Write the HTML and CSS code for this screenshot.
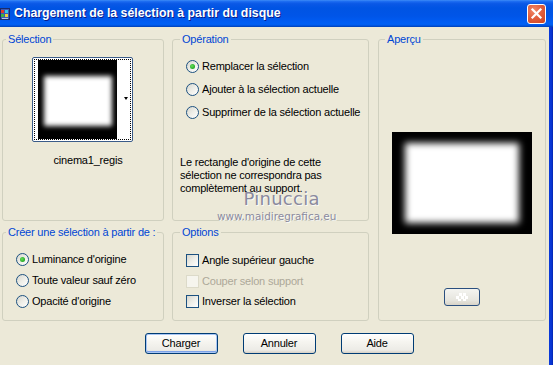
FILE: index.html
```html
<!DOCTYPE html>
<html lang="fr">
<head>
<meta charset="utf-8">
<title>Chargement de la sélection à partir du disque</title>
<link rel="stylesheet" href="styles.css">
</head>
<body>
<div class="window">
  <header class="titlebar">
    <svg class="app-icon" width="11" height="14" viewBox="0 0 11 14">
      <rect x="0" y="1" width="10" height="12" fill="#1a2a6a"/>
      <rect x="1" y="2" width="8" height="10" fill="#3a58b8"/>
      <rect x="1" y="3" width="3" height="3" fill="#e03a2a"/>
      <rect x="5" y="3" width="3" height="3" fill="#38c8e8"/>
      <rect x="1" y="7" width="3" height="3" fill="#40b040"/>
      <rect x="5" y="7" width="3" height="3" fill="#f0d040"/>
      <rect x="2" y="11" width="6" height="1" fill="#c0c8e0"/>
    </svg>
    <span class="title">Chargement de la sélection à partir du disque</span>
    <span class="close" aria-label="Fermer">
      <svg width="17" height="18" viewBox="0 0 17 18"><path d="M4.5 4.5 L12.5 12.5 M12.5 4.5 L4.5 12.5" stroke="#fff" stroke-width="2.2" stroke-linecap="square"/></svg>
    </span>
  </header>
  <div class="frame">
    <main class="client">
      <div class="groups">
        <fieldset class="group g-sel">
          <legend>Sélection</legend>
          <div class="thumb">
            <div class="thumb-focus">
              <div class="thumb-img"><div class="glow glow-small"></div></div>
              <span class="thumb-arrow"></span>
            </div>
          </div>
          <div class="thumb-name">cinema1_regis</div>
        </fieldset>

        <fieldset class="group g-op">
          <legend>Opération</legend>
          <div class="options-list op-list">
            <label class="opt"><span class="radio checked"></span><span>Remplacer la sélection</span></label>
            <label class="opt"><span class="radio"></span><span>Ajouter à la sélection actuelle</span></label>
            <label class="opt"><span class="radio"></span><span>Supprimer de la sélection actuelle</span></label>
          </div>
          <p class="note">Le rectangle d'origine de cette<br>sélection ne correspondra pas<br>complètement au support.</p>
        </fieldset>

        <fieldset class="group g-prev">
          <legend>Aperçu</legend>
          <div class="preview"><div class="glow glow-big"></div></div>
          <button class="btn btn-small" type="button" aria-label="Fond">
            <svg width="14" height="8" viewBox="0 0 14 8">
              <rect x="4" y="0" width="3" height="3" fill="#fff"/>
              <rect x="8" y="0" width="3" height="3" fill="#fff"/>
              <rect x="1" y="3" width="3" height="3" fill="#fff"/>
              <rect x="6" y="3" width="3" height="3" fill="#fff"/>
              <rect x="10" y="3" width="3" height="3" fill="#fff"/>
              <rect x="3" y="6" width="3" height="2" fill="#fff"/>
              <rect x="8" y="6" width="3" height="2" fill="#fff"/>
            </svg>
          </button>
        </fieldset>

        <fieldset class="group g-create">
          <legend>Créer une sélection à partir de :</legend>
          <div class="options-list create-list">
            <label class="opt"><span class="radio checked"></span><span>Luminance d'origine</span></label>
            <label class="opt"><span class="radio"></span><span>Toute valeur sauf zéro</span></label>
            <label class="opt"><span class="radio"></span><span>Opacité d'origine</span></label>
          </div>
        </fieldset>

        <fieldset class="group g-opt">
          <legend>Options</legend>
          <div class="options-list opt-list">
            <label class="opt"><span class="check"></span><span>Angle supérieur gauche</span></label>
            <label class="opt disabled"><span class="check"></span><span>Couper selon support</span></label>
            <label class="opt"><span class="check"></span><span>Inverser la sélection</span></label>
          </div>
        </fieldset>
      </div>

      <div class="actions">
        <button class="btn btn-default" type="button">Charger</button>
        <button class="btn" type="button">Annuler</button>
        <button class="btn" type="button">Aide</button>
      </div>

      <div class="watermark">
        <span class="wm-name">Pinuccia</span>
        <span class="wm-url">www.maidiregrafica.eu</span>
      </div>
    </main>
    <div class="rborder"></div>
  </div>
</div>
</body>
</html>
```

FILE: styles.css
```css
* { box-sizing: border-box; }
html, body { margin: 0; padding: 0; }
body {
  width: 553px;
  height: 365px;
  overflow: hidden;
  background: #ECE9D8;
  font-family: "Liberation Sans", Arial, sans-serif;
  font-size: 11px;
  line-height: 13px;
  letter-spacing: -0.2px;
  color: #000;
}
.window {
  width: 553px;
  height: 365px;
  display: flex;
  flex-direction: column;
}

/* title bar */
.titlebar {
  height: 27px;
  flex: none;
  display: flex;
  align-items: center;
  background: linear-gradient(180deg, #3d8cf7 0%, #1a6af0 6%, #0a58e6 14%, #0054e3 30%, #0055e8 60%, #005cf2 80%, #0060f4 90%, #0050d8 96%, #003fb0 100%);
}
.app-icon { flex: none; margin-right: 3px; margin-top: 1px; }
.title {
  flex: 1;
  color: #fff;
  font-weight: bold;
  font-size: 12.3px;
  letter-spacing: 0;
  text-shadow: 1px 1px 0 #0a1c8a;
  white-space: nowrap;
}
.close {
  flex: none;
  width: 19px;
  height: 20px;
  margin-right: 7px;
  margin-top: 1px;
  border: 1px solid #fff;
  border-radius: 3px;
  background: radial-gradient(circle at 35% 30%, #f0896a 0%, #e2603e 45%, #cc4220 100%);
  display: flex;
  align-items: center;
  justify-content: center;
}

/* frame */
.frame { flex: 1; display: flex; }
.client {
  flex: 1;
  position: relative;
  padding: 6px 0 0 2px;
}
.rborder {
  width: 4px;
  flex: none;
  background: linear-gradient(90deg, #0a3ad8 0%, #0836d6 50%, #0631cc 75%, #0322a6 100%);
}

/* groups grid */
.groups {
  display: grid;
  grid-template-columns: 162px 197px 169px;
  grid-template-rows: 188px 95px;
  column-gap: 8px;
  row-gap: 5px;
}
.group {
  margin: 0;
  padding: 0;
  min-width: 0;
  border: 1px solid #D0D0BF;
  border-radius: 3px;
  display: flex;
  flex-direction: column;
}
.group legend {
  color: #0046D5;
  padding: 0 2px;
  margin-left: 3px;
  line-height: 13px;
}
.g-op legend, .g-opt legend { margin-left: 7px; }
.g-prev legend { margin-left: 6px; }

.g-sel { grid-column: 1; grid-row: 1; align-items: center; }
.g-op { grid-column: 2; grid-row: 1; }
.g-prev { grid-column: 3; grid-row: 1 / span 2; width: 168px; justify-self: end; align-items: center; }
.g-create { grid-column: 1; grid-row: 2; }
.g-opt { grid-column: 2; grid-row: 2; }

/* selection thumbnail */
.thumb {
  margin-top: 11px;
  margin-left: -1px;
  width: 101px;
  height: 85px;
  border: 1px solid #3a5b88;
  border-radius: 2px;
  background: #fff;
  padding: 1px;
}
.thumb-focus {
  height: 100%;
  border: 1px dotted #000;
  display: flex;
  align-items: flex-start;
  padding-left: 3px;
}
.thumb-img {
  width: 79px;
  height: 79px;
  background: #000;
  overflow: hidden;
  display: flex;
  align-items: center;
  justify-content: center;
}
.glow { background: #fff; flex: none; }
.glow-small { width: 68px; height: 50px; filter: blur(2.5px); margin-top: 2px; }
.thumb-arrow {
  margin: 37px 0 0 7px;
  width: 0;
  height: 0;
  border-left: 2.5px solid transparent;
  border-right: 2.5px solid transparent;
  border-top: 3px solid #000;
}
.thumb-name {
  margin-top: 12px;
  margin-left: 10px;
}

/* option lists */
.options-list {
  display: flex;
  flex-direction: column;
  padding-left: 13px;
}
.op-list { margin-top: 14px; gap: 10px; }
.create-list { margin-top: 14px; gap: 8px; }
.opt-list { margin-top: 15px; gap: 7.5px; }
.opt {
  display: flex;
  align-items: center;
  height: 13px;
  gap: 3px;
  white-space: nowrap;
}
.opt.disabled { color: #ACA899; }
.radio {
  flex: none;
  width: 13px;
  height: 13px;
  border-radius: 50%;
  border: 1px solid #1C5180;
  background: linear-gradient(135deg, #D6D6CE 0%, #EEEEE8 50%, #FFFFFF 100%);
  display: flex;
  align-items: center;
  justify-content: center;
}
.radio.checked::after {
  content: "";
  width: 5px;
  height: 5px;
  border-radius: 50%;
  background: radial-gradient(circle at 40% 40%, #6ade5a 0%, #2cb02c 60%, #1a8f1a 100%);
}
.check {
  flex: none;
  width: 13px;
  height: 13px;
  border: 1px solid #1C5180;
  background: linear-gradient(135deg, #D6D6CE 0%, #EEEEE8 50%, #FFFFFF 100%);
}
.opt.disabled .check {
  border-color: #DCDAC9;
  background: #F6F5EE;
}

.note {
  margin: 37px 0 0 7px;
}

/* preview */
.preview {
  margin-top: 86px;
  width: 140px;
  height: 102px;
  background: #000;
  overflow: hidden;
  display: flex;
  align-items: center;
  justify-content: center;
}
.glow-big { width: 114px; height: 80px; filter: blur(3.5px); }

/* buttons */
.btn {
  font: inherit;
  letter-spacing: inherit;
  color: #000;
  width: 73px;
  height: 21px;
  padding: 0;
  border: 1px solid #003C74;
  border-radius: 3px;
  background: linear-gradient(180deg, #FFFFFF 0%, #F6F5F0 40%, #ECEBE6 85%, #D6D0C5 100%);
  display: flex;
  align-items: center;
  justify-content: center;
}
.btn-default {
  box-shadow: inset 0 0 0 1px #A9C6F4, inset 0 -1px 0 1px #7DA2E8;
}
.btn-small {
  margin-top: 54px;
  width: 36px;
  height: 18px;
  border-color: #2a4f7f;
  background: linear-gradient(180deg, #F4F4F0 0%, #E6E5DE 70%, #D8D4C8 100%);
}
.actions {
  display: flex;
  justify-content: center;
  gap: 25px;
  margin-top: 12px;
  padding-left: 7px;
}

/* watermark overlay */
.watermark {
  position: absolute;
  left: 217px;
  top: 162px;
  display: flex;
  flex-direction: column;
  align-items: center;
  pointer-events: none;
  font-family: "DejaVu Sans", sans-serif;
  letter-spacing: 0;
  color: #8a8a9e;
  text-shadow: 1px 1px 0 rgba(255,255,255,0.8);
}
.wm-name { font-size: 18px; line-height: 19px; letter-spacing: 0.3px; margin-left: 10px; }
.wm-url { font-size: 10.4px; line-height: 12px; margin-top: 2px; }
```
